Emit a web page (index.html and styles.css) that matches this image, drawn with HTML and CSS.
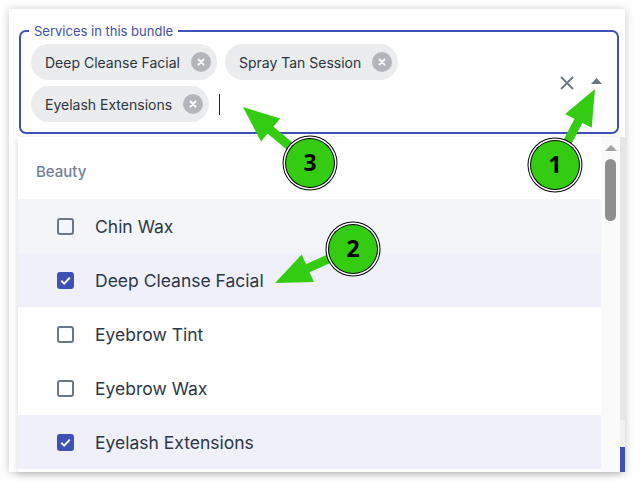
FILE: index.html
```html
<!DOCTYPE html>
<html>
<head>
<meta charset="utf-8">
<link rel="stylesheet" href="styles.css">
</head>
<body>
<div class="card">
  <fieldset class="field">
    <legend class="field-label">Services in this bundle</legend>
    <div class="field-body">
      <div class="chips">
        <span class="chip"><span class="chip-label">Deep Cleanse Facial</span><span class="chip-del"><svg width="8" height="8" viewBox="0 0 8 8"><path d="M1.5 1.5L6.5 6.5M6.5 1.5L1.5 6.5" stroke="#fff" stroke-width="1.8" stroke-linecap="round"/></svg></span></span>
        <span class="chip"><span class="chip-label">Spray Tan Session</span><span class="chip-del"><svg width="8" height="8" viewBox="0 0 8 8"><path d="M1.5 1.5L6.5 6.5M6.5 1.5L1.5 6.5" stroke="#fff" stroke-width="1.8" stroke-linecap="round"/></svg></span></span>
        <span class="chip"><span class="chip-label">Eyelash Extensions</span><span class="chip-del"><svg width="8" height="8" viewBox="0 0 8 8"><path d="M1.5 1.5L6.5 6.5M6.5 1.5L1.5 6.5" stroke="#fff" stroke-width="1.8" stroke-linecap="round"/></svg></span></span>
        <span class="caret"></span>
      </div>
      <div class="adorn">
        <svg class="clear-icon" width="14" height="14" viewBox="0 0 14 14"><path d="M1 1L13 13M13 1L1 13" stroke="#6b7785" stroke-width="1.8"/></svg>
        <svg class="toggle-icon" width="11" height="6" viewBox="0 0 11 6"><path d="M0 6L5.5 0L11 6Z" fill="#6b7785"/></svg>
      </div>
    </div>
  </fieldset>
  <div class="lower">
    <div class="menu">
      <ul class="list">
        <li class="group">Beauty</li>
        <li class="opt hover"><span class="cb"></span>Chin Wax</li>
        <li class="opt selected"><span class="cb checked"><svg width="13" height="13" viewBox="0 0 13 13"><path d="M2.3 6.8L5.2 9.6L10.8 3.6" stroke="#fff" stroke-width="2" fill="none"/></svg></span>Deep Cleanse Facial</li>
        <li class="opt"><span class="cb"></span>Eyebrow Tint</li>
        <li class="opt"><span class="cb"></span>Eyebrow Wax</li>
        <li class="opt selected"><span class="cb checked"><svg width="13" height="13" viewBox="0 0 13 13"><path d="M2.3 6.8L5.2 9.6L10.8 3.6" stroke="#fff" stroke-width="2" fill="none"/></svg></span>Eyelash Extensions</li>
      </ul>
      <div class="scrollbar"><span class="sb-up"></span><span class="sb-thumb"></span></div>
    </div>
    <div class="edge"></div>
  </div>
</div>
<svg class="notes" width="640" height="487" viewBox="0 0 640 487">
  <g fill="#33cc11" stroke="none">
    <line x1="555" y1="166" x2="580" y2="118" stroke="#33cc11" stroke-width="9"/>
    <polygon points="595,89 591.7,127.8 565.1,114"/>
    <line x1="353" y1="248" x2="306" y2="269" stroke="#33cc11" stroke-width="9"/>
    <polygon points="275,283 301.7,254.6 313.9,282"/>
    <line x1="310" y1="163" x2="268" y2="128" stroke="#33cc11" stroke-width="9"/>
    <polygon points="243,107 280.2,118.6 261,141.6"/>
  </g>
  <g class="badge">
    <circle cx="555" cy="165" r="27.5" fill="#000"/>
    <circle cx="555" cy="165" r="26.5" fill="#fff"/>
    <circle cx="555" cy="165" r="25" fill="#000"/>
    <circle cx="555" cy="165" r="24" fill="#33cc11"/>
    <text x="555" y="173" text-anchor="middle">1</text>
  </g>
  <g class="badge">
    <circle cx="353" cy="249" r="27.5" fill="#000"/>
    <circle cx="353" cy="249" r="26.5" fill="#fff"/>
    <circle cx="353" cy="249" r="25" fill="#000"/>
    <circle cx="353" cy="249" r="24" fill="#33cc11"/>
    <text x="353" y="257" text-anchor="middle">2</text>
  </g>
  <g class="badge">
    <circle cx="310" cy="163" r="27.5" fill="#000"/>
    <circle cx="310" cy="163" r="26.5" fill="#fff"/>
    <circle cx="310" cy="163" r="25" fill="#000"/>
    <circle cx="310" cy="163" r="24" fill="#33cc11"/>
    <text x="310" y="171" text-anchor="middle">3</text>
  </g>
</svg>
</body>
</html>
```

FILE: styles.css
```css
html, body {
  margin: 0;
  padding: 0;
  background: #fff;
}
body {
  font-family: Inter, "Noto Sans", sans-serif;
  position: relative;
  width: 640px;
  height: 487px;
  overflow: hidden;
}
.card {
  margin: 9px 0 0 9px;
  width: 616px;
  height: 463px;
  box-sizing: border-box;
  padding: 14px 6px 0 10px;
  background: #fff;
  box-shadow: 0 1px 9px rgba(0, 0, 0, 0.22);
  display: flex;
  flex-direction: column;
}
.field {
  margin: 0;
  padding: 0;
  min-width: 0;
  border: 2px solid #4051b5;
  border-radius: 7px;
}
.field-label {
  margin-left: 8px;
  padding: 0 5px;
  font-size: 13px;
  line-height: 16px;
  color: #4051b5;
}
.field-body {
  display: flex;
  align-items: center;
  padding: 5px 15px 10px 10px;
}
.chips {
  flex: 1;
  display: flex;
  flex-wrap: wrap;
  align-items: center;
  column-gap: 8px;
  row-gap: 6px;
}
.chip {
  display: inline-flex;
  align-items: center;
  height: 36px;
  padding-left: 14px;
  border-radius: 18px;
  background: #ebecee;
  color: #2d3540;
  font-size: 14px;
}
.chip-del {
  width: 20px;
  height: 20px;
  border-radius: 50%;
  background: #b3b5ba;
  margin: 0 6px 0 11px;
  display: flex;
  align-items: center;
  justify-content: center;
}
.chip-del svg {
  display: block;
}
.caret {
  width: 1px;
  height: 21px;
  background: #222;
  margin-left: 2px;
}
.adorn {
  display: flex;
  align-items: center;
  gap: 17px;
}
.adorn svg {
  display: block;
}
.toggle-icon {
  margin-top: -4px;
}
.lower {
  display: flex;
  margin: 3px -6px 0 -1px;
  height: 335px;
}
.menu {
  width: 602px;
  display: flex;
  background: #fff;
  box-shadow: 0 2px 7px rgba(0, 0, 0, 0.16);
  overflow: hidden;
}
.list {
  list-style: none;
  margin: 0;
  padding: 0;
  width: 583px;
}
.group {
  height: 62px;
  box-sizing: border-box;
  padding: 6px 0 0 18px;
  display: flex;
  align-items: center;
  font-size: 15px;
  font-weight: 500;
  color: #718096;
}
.opt {
  height: 54px;
  display: flex;
  align-items: center;
  padding-left: 39px;
  font-size: 17.5px;
  color: #2d3748;
}
.opt.hover {
  background: #f4f5f8;
}
.opt.selected {
  background: #eff0f9;
}
.cb {
  width: 17px;
  height: 17px;
  box-sizing: border-box;
  border: 2px solid #6b7785;
  border-radius: 3px;
  margin-right: 21px;
  display: flex;
  align-items: center;
  justify-content: center;
}
.cb.checked {
  background: #4051b5;
  border-color: #4051b5;
}
.cb svg {
  display: block;
}
.scrollbar {
  width: 19px;
  background: #fafafa;
  display: flex;
  flex-direction: column;
  align-items: center;
  padding-top: 8px;
}
.sb-up {
  width: 0;
  height: 0;
  border-left: 6px solid transparent;
  border-right: 6px solid transparent;
  border-bottom: 6px solid #a3a3a3;
}
.sb-thumb {
  margin-top: 8px;
  width: 11px;
  height: 62px;
  border-radius: 6px;
  background: #8e8e8e;
}
.edge {
  width: 5px;
  background: linear-gradient(#e6e6e6 0, #e6e6e6 283px, #f1f1f1 283px, #f1f1f1 310px, #4051b5 310px);
}
.notes {
  position: absolute;
  left: 0;
  top: 0;
  pointer-events: none;
}
.badge text {
  font-family: "Open Sans", "Noto Sans", sans-serif;
  font-weight: 700;
  font-size: 23px;
  fill: #000;
}
```
